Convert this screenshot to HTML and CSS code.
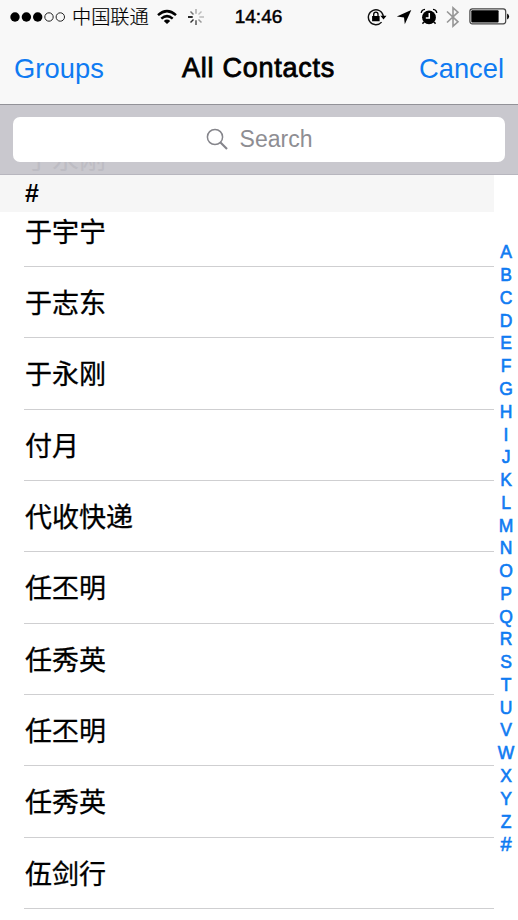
FILE: index.html
```html
<!DOCTYPE html>
<html lang="en">
<head>
<meta charset="utf-8">
<title>All Contacts</title>
<link rel="stylesheet" href="styles.css">
</head>
<body>
<div class="phone">
  <header class="top">
    <div class="status">
      <div class="status-side">
        <svg class="signal" width="56" height="12" viewBox="0 0 56 12"><g fill="#000"><circle cx="5" cy="6" r="4.7"/><circle cx="16.4" cy="6" r="4.7"/><circle cx="27.7" cy="6" r="4.7"/></g><g fill="none" stroke="#222"><circle cx="39" cy="6" r="4.2"/><circle cx="50.3" cy="6" r="4.2"/></g></svg>
        <span class="carrier">中国联通</span>
        <svg class="wifi" width="20" height="16" viewBox="0 0 20 16"><g fill="none" stroke="#000" stroke-width="2.5"><path d="M1 6.1Q10-1.9 19 6.1"/><path d="M4.3 9.6Q10 4.6 15.7 9.6"/></g><path d="M6.8 11.9Q10 9.3 13.2 11.9L10 15.1Z"/></svg>
        <svg class="spinner" width="18" height="18" viewBox="0 0 18 18"><g stroke-width="1.5"><path stroke="#aaa" d="M9 1v4.7"/><path stroke="#bbb" d="M14.5 3.5l-3 3"/><path stroke="#bbb" d="M12.3 9H17"/><path stroke="#999" d="M11.5 11.5l3 3"/><path stroke="#555" d="M9 12.3V17"/><path stroke="#333" d="M6.5 11.5l-3 3"/><path stroke="#111" stroke-width="1.8" d="M5.7 9H1"/><path stroke="#777" d="M6.5 6.5l-3-3"/></g></svg>
      </div>
      <span class="time">14:46</span>
      <div class="status-side status-right">
        <svg width="20" height="18" viewBox="0 0 20 18"><path d="M14.6 14.1A7.5 7.5 0 1 1 16.3 8.2" fill="none" stroke="#111" stroke-width="1.4"/><path d="M13.4 7.8h6.1l-3 3.7zM5.1 8h7.5v5.2H5.1z"/><path d="M6.7 8V6.2a2.15 2.15 0 0 1 4.3 0V8" fill="none" stroke="#000" stroke-width="1.3"/></svg>
        <svg class="locate" width="16" height="16" viewBox="0 0 16 16"><path d="M15.3 1L8.8 15.3 8 8.4.8 7.5Z"/></svg>
        <svg class="alarm" width="18" height="18" viewBox="0 0 18 18"><circle cx="9" cy="9.4" r="6.9"/><path d="M3.8 14l-1.3 1.7M14.2 14l1.3 1.7" stroke="#000" stroke-width="1.4"/><path d="M1.2 5Q1.5 1.8 5 1.3M16.8 5Q16.5 1.8 13 1.3" fill="none" stroke="#000" stroke-width="1.3"/><path d="M9.3 5v5H5.8" fill="none" stroke="#fff" stroke-width="1.5"/></svg>
        <svg class="bluetooth" width="14" height="22" viewBox="0 0 14 22"><path d="M1 5.5l11 10.3L7 20.2V1.8l5 4.4L1 16.5" fill="none" stroke="#969696" stroke-width="1.6"/></svg>
        <svg class="battery" width="41" height="17" viewBox="0 0 41 17"><rect x=".9" y=".9" width="35.8" height="14.9" rx="2.5" fill="none" stroke="#444" stroke-width="1.2"/><rect x="2.3" y="2.3" width="27.3" height="12.1" rx="1"/><path d="M38.1 5.5q2 1 2 3t-2 3z"/></svg>
      </div>
    </div>
    <nav class="navbar">
      <a class="nav-link nav-groups">Groups</a>
      <h1 class="title">All Contacts</h1>
      <a class="nav-link nav-cancel">Cancel</a>
    </nav>
  </header>
  <div class="search-bar">
    <span class="under">于永刚</span>
    <div class="search-field">
      <svg width="23" height="23" viewBox="0 0 23 23"><circle cx="9" cy="9" r="7.6" fill="none" stroke="#85858b" stroke-width="1.5"/><path d="M14.5 14.5l6.5 6.5" stroke="#85858b" stroke-width="2.1"/></svg>
      <span>Search</span>
    </div>
  </div>
  <main class="body">
    <section class="contacts">
      <h2 class="section">#</h2>
      <ul class="list">
        <li class="first">于宇宁</li>
        <li>于志东</li>
        <li>于永刚</li>
        <li>付月</li>
        <li>代收快递</li>
        <li>任丕明</li>
        <li>任秀英</li>
        <li>任丕明</li>
        <li>任秀英</li>
        <li>伍剑行</li>
      </ul>
    </section>
    <aside class="index">
      <span>A</span><span>B</span><span>C</span><span>D</span><span>E</span><span>F</span><span>G</span><span>H</span><span>I</span><span>J</span><span>K</span><span>L</span><span>M</span><span>N</span><span>O</span><span>P</span><span>Q</span><span>R</span><span>S</span><span>T</span><span>U</span><span>V</span><span>W</span><span>X</span><span>Y</span><span>Z</span><span class="hash">#</span>
    </aside>
  </main>
</div>
</body>
</html>
```
FILE: styles.css
```css
* { box-sizing: border-box; margin: 0; padding: 0; }
body {
  background: #fff;
  color: #000;
  font-family: "Liberation Sans", "Noto Sans CJK SC", sans-serif;
}
svg { display: block; flex: none; }
.phone { width: 518px; height: 920px; overflow: hidden; }
.top { height: 104px; background: #f8f8f8; }
.status {
  display: grid;
  grid-template-columns: 1fr auto 1fr;
  align-items: center;
  height: 33px;
}
.status-side { display: flex; align-items: center; height: 33px; }
.signal { margin-left: 10px; }
.carrier {
  margin-left: 6px;
  font-family: "Noto Sans CJK SC", sans-serif;
  font-size: 19.2px;
  font-weight: 300;
  line-height: 33px;
  -webkit-text-stroke: .2px #000;
}
.wifi { margin-left: 8px; }
.spinner { margin-left: 10px; }
.time {
  padding-right: 1px;
  font-size: 19px;
  line-height: 33px;
  -webkit-text-stroke: .5px #000;
}
.status-right { justify-content: flex-end; padding-right: 8px; }
.locate { margin-left: 9px; }
.alarm { margin-left: 8px; }
.bluetooth { margin-left: 8px; }
.battery { margin-left: 9px; }
.navbar {
  display: grid;
  grid-template-columns: 1fr auto 1fr;
  align-items: center;
  height: 71px;
  padding: 0 14px 0 13px;
}
.nav-link { color: #0f7bf2; font-size: 27.3px; line-height: 71px; }
.nav-groups { padding-left: 1px; letter-spacing: .1px; }
.nav-cancel { text-align: right; }
.title {
  font-size: 27px;
  font-weight: 400;
  letter-spacing: .75px;
  line-height: 71px;
  -webkit-text-stroke: .8px #000;
}
.search-bar {
  position: relative;
  height: 71px;
  padding: 12px 13px;
  overflow: hidden;
  background: #c9c8ce;
  border-top: 1px solid #929298;
  border-bottom: 1px solid #b7b6be;
}
.under {
  position: absolute;
  left: 25px;
  top: 37px;
  color: #bdbcc3;
  font-size: 27px;
  line-height: 36px;
}
.search-field {
  position: relative;
  display: flex;
  align-items: center;
  justify-content: center;
  gap: 11px;
  height: 45px;
  border-radius: 7px;
  background: #fff;
  color: #8e8e93;
  font-size: 23px;
}
.body { display: flex; height: 745px; }
.contacts { width: 494px; }
.section {
  height: 36.5px;
  padding-left: 25px;
  background: #f6f6f6;
  font-size: 25px;
  font-weight: 700;
  line-height: 36px;
}
.list {
  list-style: none;
  margin-left: 24px;
  font-family: "Noto Sans CJK SC", sans-serif;
  font-size: 27px;
  -webkit-text-stroke: .3px #000;
}
.list li {
  height: 71.3px;
  padding-left: 1px;
  border-bottom: 1px solid #cfcfd1;
  line-height: 69px;
}
.list .first { height: 55.7px; line-height: 38px; }
.index {
  display: flex;
  flex-direction: column;
  width: 24px;
  padding-top: 66.4px;
  color: #0f7bf2;
  font-size: 17.5px;
  text-align: center;
  -webkit-text-stroke: .6px #0f7bf2;
}
.index span { height: 22.77px; line-height: 22.77px; }
.index .hash { font-size: 20px; }
```
